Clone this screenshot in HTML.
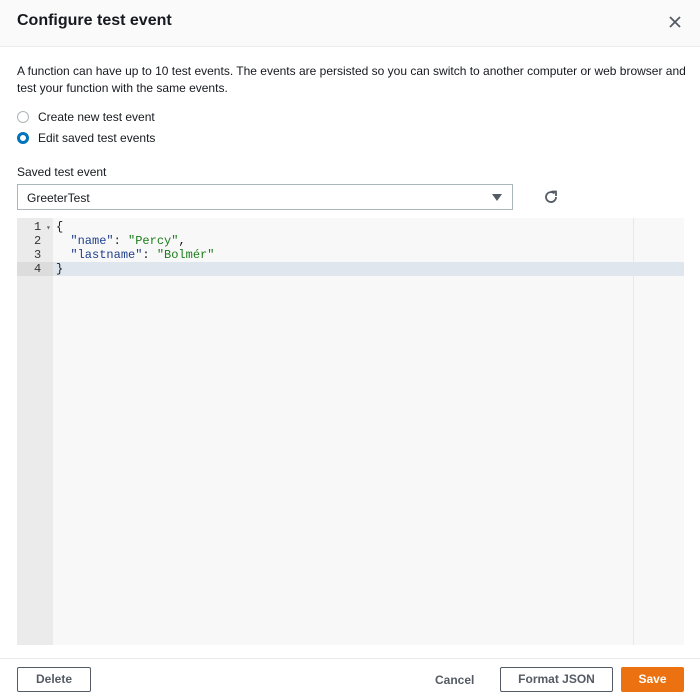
<!DOCTYPE html>
<html><head><style>
*{box-sizing:border-box;margin:0;padding:0}
body{width:700px;height:700px;background:#fff;font-family:"Liberation Sans",sans-serif;color:#16191f;position:relative;overflow:hidden}
.hdr{position:absolute;left:0;top:0;width:700px;height:47px;background:#fafafa;border-bottom:1px solid #eaeded}
.hdr h1{position:absolute;left:17px;top:12px;font-size:16px;font-weight:bold}
.x{position:absolute;left:667px;top:14px}
.p{position:absolute;left:17px;top:63px;font-size:12px;line-height:17px;width:670px}
.r{position:absolute;left:17px;font-size:12px;display:flex;align-items:center}
.rb{width:12px;height:12px;border-radius:50%;border:1px solid #aab7b8;margin-right:9px;background:#fff}
.rb.on{border:3.5px solid #0073bb}
.lbl{position:absolute;left:17px;top:165px;font-size:12px}
.sel{position:absolute;left:17px;top:184px;width:496px;height:26px;border:1px solid #aab7b8;font-size:12px;padding:6px 9px}
.arr{position:absolute;right:10px;top:9px;width:0;height:0;border-left:5px solid transparent;border-right:5px solid transparent;border-top:7px solid #545b64}
.ed{position:absolute;left:17px;top:218px;width:667px;height:427px;background:#f8f8f8}
.gut{position:absolute;left:0;top:0;width:36px;height:427px;background:#ebebeb}
.pm{position:absolute;left:616px;top:0;width:1px;height:427px;background:#e8e8e8}
.hl{position:absolute;left:36px;top:44px;width:631px;height:14px;background:#dfe6ee}
.hlg{position:absolute;left:0;top:44px;width:36px;height:14px;background:#dcdcdc}
.code{position:absolute;top:2px;font-family:"Liberation Mono",monospace;font-size:12px;line-height:14px;white-space:pre}
.k{color:#1f3f8c}.s{color:#1a7d1a}
.ftr{position:absolute;left:0;top:658px;width:700px;border-top:1px solid #eaeded}
.btn{position:absolute;top:667px;height:25px;border:1px solid #545b64;border-radius:2px;font-size:12px;font-weight:bold;color:#545b64;text-align:center;line-height:23px;background:#fff}
</style></head><body>
<div class="hdr"><h1>Configure test event</h1>
<svg class="x" width="16" height="16" viewBox="0 0 16 16"><path d="M3 3L13 13M13 3L3 13" stroke="#545b64" stroke-width="1.8"/></svg></div>
<div class="p">A function can have up to 10 test events. The events are persisted so you can switch to another computer or web browser and test your function with the same events.</div>
<div class="r" style="top:110px"><span class="rb"></span>Create new test event</div>
<div class="r" style="top:131px"><span class="rb on"></span>Edit saved test events</div>
<div class="lbl">Saved test event</div>
<div class="sel">GreeterTest<span class="arr"></span></div>
<svg style="position:absolute;left:543px;top:189px" width="16" height="16" viewBox="0 0 16 16"><path d="M13 8A5 5 0 1 1 11.5 4.5" fill="none" stroke="#545b64" stroke-width="1.8"/><path d="M8.5 2.5H13V7" fill="none" stroke="#545b64" stroke-width="1.8"/></svg>
<div class="ed"><div class="gut"></div><div class="pm"></div><div class="hlg"></div><div class="hl"></div>
<div class="code" style="left:17px;color:#333">1
2
3
4</div>
<div class="code" style="left:29px;color:#666;font-size:8px;top:4px">▾</div>
<div class="code" style="left:39px">{
  <span class="k">"name"</span>: <span class="s">"Percy"</span>,
  <span class="k">"lastname"</span>: <span class="s">"Bolmér"</span>
}</div></div>
<div class="ftr"></div>
<div class="btn" style="left:17px;width:74px">Delete</div>
<div style="position:absolute;left:435px;top:673px;font-size:12px;font-weight:bold;color:#545b64">Cancel</div>
<div class="btn" style="left:500px;width:113px">Format JSON</div>
<div class="btn" style="left:621px;width:63px;background:#ec7211;border-color:#ec7211;color:#fff">Save</div>
</body></html>
